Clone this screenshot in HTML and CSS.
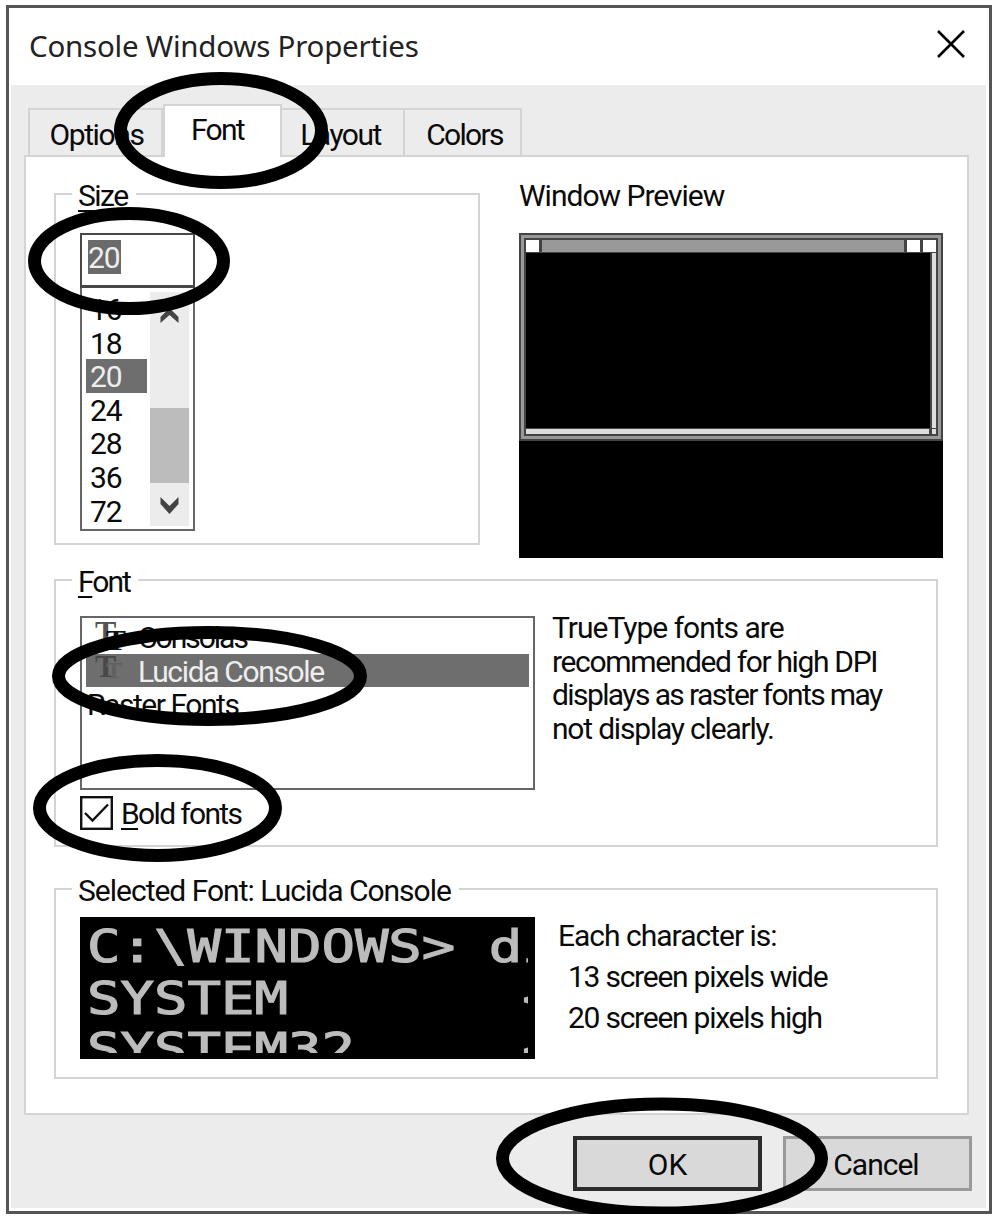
FILE: index.html
```html
<!DOCTYPE html>
<html lang="en">
<head>
<meta charset="utf-8">
<title>Console Windows Properties</title>
<link rel="stylesheet" href="styles.css">
</head>
<body>
<div class="window">
  <header class="titlebar">
    <h1 class="title">Console Windows Properties</h1>
    <svg class="close" width="30" height="30" viewBox="0 0 30 30"><path d="M2 2L28 28M28 2L2 28" stroke="#000" stroke-width="2.6" fill="none"/></svg>
  </header>
  <main class="body">
    <nav class="tabs">
      <div class="tab tab-options">Options</div>
      <div class="tab tab-font active">Font</div>
      <div class="tab tab-layout">Layout</div>
      <div class="tab tab-colors">Colors</div>
    </nav>
    <section class="panel">
      <div class="top-row">
        <fieldset class="group size-group">
          <legend><u>S</u>ize</legend>
          <div class="size-edit"><span class="selection">20</span></div>
          <div class="size-list">
            <div class="size-items">
              <div>16</div><div>18</div><div class="selected">20</div><div>24</div><div>28</div><div>36</div><div>72</div>
            </div>
            <div class="scrollbar">
              <svg width="39" height="36" viewBox="0 0 39 36"><path d="M10.5 25L19.500 16L28.500 25V31L19.500 23L10.500 31Z" fill="#444"/></svg>
              <div class="thumb"></div>
              <svg width="39" height="43" viewBox="0 0 39 43"><path d="M10.500 14L19.500 23L28.500 14V21L19.500 31L10.500 21Z" fill="#444"/></svg>
            </div>
          </div>
        </fieldset>
        <div class="preview">
          <div class="label preview-label">Window Preview</div>
          <div class="desktop">
            <div class="mini">
              <div class="mini-title"><i></i><b></b><i></i><i></i></div>
              <div class="mini-main"><div class="mini-screen"></div><div class="mini-vscroll"></div></div>
              <div class="mini-bottom"><div class="mini-hscroll"></div><div class="mini-corner"></div></div>
            </div>
          </div>
        </div>
      </div>
      <fieldset class="group font-group">
        <legend><u>F</u>ont</legend>
        <div class="font-row">
          <div class="font-list">
            <div class="font-item consolas"><span class="tt"><span class="t-back">T</span><span class="t-front">T</span></span>Consolas</div>
            <div class="font-item selected"><span class="tt"><span class="t-back">T</span><span class="t-front">T</span></span>Lucida Console</div>
            <div class="font-item raster">Raster Fonts</div>
          </div>
          <p class="advice"><span class="a1">TrueType fonts are</span><br><span class="a2">recommended for high DPI</span><br><span class="a3">displays as raster fonts may</span><br><span class="a4">not display clearly.</span></p>
        </div>
        <div class="check-row">
          <svg width="33" height="34" viewBox="0 0 33 34"><rect x="1.200" y="1.200" width="30.600" height="31.600" fill="#fff" stroke="#111" stroke-width="2.400"/><path d="M5 17L12.500 24.500L28 8.500" fill="none" stroke="#111" stroke-width="2.400"/></svg>
          <span class="bold-label"><u>B</u>old fonts</span>
        </div>
      </fieldset>
      <fieldset class="group sample-group">
        <legend class="sample-legend">Selected Font: Lucida Console</legend>
        <div class="sample-row">
          <div class="sample"><div class="sample-clip"><pre>C:\WINDOWS&gt; dir
SYSTEM       &lt;DIR&gt;
SYSTEM32     &lt;DIR&gt;</pre></div></div>
          <div class="metrics">
            <div class="m1">Each character is:</div>
            <div class="m2">13 screen pixels wide</div>
            <div class="m3">20 screen pixels high</div>
          </div>
        </div>
      </fieldset>
    </section>
    <footer class="buttons">
      <div class="button ok">OK</div>
      <div class="button cancel">Cancel</div>
    </footer>
  </main>
</div>
<svg class="marks" width="1000" height="1214" viewBox="0 0 1000 1214">
  <ellipse cx="221" cy="130.500" rx="100.500" ry="52"/>
  <ellipse cx="129" cy="261" rx="94.500" ry="47.500"/>
  <ellipse cx="209.500" cy="676" rx="151" ry="43.500"/>
  <ellipse cx="157.500" cy="808" rx="118" ry="47.500"/>
  <ellipse cx="662" cy="1158.500" rx="159.500" ry="54.500"/>
</svg>
</body>
</html>
```
FILE: styles.css
```css
* { box-sizing: border-box; }
body {
  margin: 0;
  width: 1000px;
  height: 1222px;
  padding: 5px 0 0 6px;
  overflow: hidden;
  background: #fff;
  color: #0a0a0a;
  font: 400 30px/34px Roboto, "Noto Sans", sans-serif;
  letter-spacing: -1px;
  position: relative;
}
.window {
  width: 986px;
  height: 1209px;
  border: 3px solid #555;
  background: #fff;
  padding: 0 3px 3px 2px;
  display: flex;
  flex-direction: column;
}
.titlebar {
  height: 77px;
  flex: none;
  display: flex;
  justify-content: space-between;
  align-items: flex-start;
  padding: 21px 20px 0 18px;
}
.title {
  margin: 0;
  font: 400 29.500px/34px "Noto Sans", sans-serif;
  letter-spacing: -0.230px;
  color: #222;
  white-space: nowrap;
}
.close { display: block; }
.body {
  flex: 1;
  background: #ececec;
  padding: 19px 17px 0 13px;
}
.tabs {
  display: flex;
  align-items: flex-end;
  height: 51px;
  padding-left: 4px;
}
.tab {
  height: 47px;
  border: 2px solid #d4d4d4;
  border-left-width: 0;
  border-bottom: 0;
  padding-top: 8px;
  text-align: center;
}
.tab-options { width: 135px; border-left-width: 2px; padding-left: 2px; letter-spacing: -1.400px; }
.tab-font { width: 119px; letter-spacing: -1.700px; }
.tab-layout { width: 123px; padding-right: 4px; letter-spacing: -1.500px; }
.tab-colors { width: 117px; padding-left: 4px; letter-spacing: -1.700px; }
.tab.active {
  height: 53px;
  margin-bottom: -2px;
  padding: 7px 10px 0 0;
  background: #fff;
  border-left-width: 2px;
  z-index: 1;
}
.panel {
  height: 960px;
  border: 2px solid #d4d4d4;
  background: #fff;
  padding: 22px 24px 0 28px;
}
.top-row { display: flex; justify-content: space-between; }
.group {
  margin: 0;
  padding: 0 0 0 24px;
  border: 2px solid #d4d4d4;
  min-width: 0;
}
.group legend {
  height: 30px;
  padding: 0 8px 0 6px;
  margin-left: -8px;
  white-space: nowrap;
}
u {
  text-decoration: underline;
  text-decoration-thickness: 2px;
  text-underline-offset: 4px;
}
.size-group { width: 426px; height: 366px; }
.size-group > legend { letter-spacing: -1.500px; }
.size-edit {
  width: 115px;
  height: 55px;
  margin-top: 24px;
  border: 2px solid #484848;
  border-bottom-width: 3px;
  padding: 5px 6px;
}
.selection {
  display: block;
  width: 33px;
  height: 34px;
  background: #6a6a6a;
  color: #eee;
  line-height: 36px;
}
.size-list {
  width: 115px;
  height: 243px;
  border: 2px solid #666;
  border-top: 0;
  display: flex;
  padding: 4px 4px 3px;
}
.size-items { width: 61px; margin-right: 3px; }
.size-items div { height: 33.600px; line-height: 35px; padding-left: 4px; }
.size-items .selected, .font-item.selected { background: #6e6e6e; color: #eee; }
.scrollbar { width: 39px; height: 234px; background: #ececec; display: flex; flex-direction: column; }
.scrollbar svg { display: block; flex: none; }
.thumb { height: 75px; margin-top: 80px; background: #bcbcbc; flex: none; }
.preview { width: 424px; }
.desktop { height: 325px; margin-top: 20px; background: #000; }
.mini {
  height: 208px;
  border: 2px solid #444;
  outline: 3px solid #999;
  outline-offset: -5px;
  padding: 3px;
  background: #444;
}
.mini-title { height: 15px; display: flex; gap: 3px; padding: 2px 2px 1px; }
.mini-title i { width: 13px; background: #fff; }
.mini-title b { flex: 1; background: #999; }
.mini-main { height: 175px; display: flex; padding: 0 2px; gap: 2px; }
.mini-screen { flex: 1; background: #000; }
.mini-vscroll { width: 4px; background: #ddd; }
.mini-bottom { height: 7px; display: flex; padding: 1px 2px; gap: 3px; }
.mini-hscroll { flex: 1; background: #ddd; }
.mini-corner { width: 4px; background: #ddd; }
.font-group { width: 884px; height: 282px; margin-top: 7px; }
.font-group > legend { letter-spacing: -2px; }
.font-row { display: flex; gap: 17px; margin-top: 21px; }
.font-list {
  width: 455px;
  height: 174px;
  border: 2px solid #666;
  padding: 2px 4px;
}
.font-item { height: 33.600px; display: flex; white-space: nowrap; line-height: 35px; letter-spacing: -1.350px; }
.consolas { letter-spacing: -2px; }
.raster { padding-left: 1px; letter-spacing: -1.450px; }
.tt {
  width: 52px;
  height: 33px;
  position: relative;
  font: 700 32px/30px "Liberation Serif", serif;
  letter-spacing: 0;
}
.t-back { position: absolute; left: 9px; top: -3px; color: #555; }
.t-front { position: absolute; left: 20px; top: 5px; font-size: 30px; color: #111; }
.selected .t-back { color: #484848; }
.selected .t-front { color: #606060; top: 1px; font-size: 24px; }
.advice { margin: -5px 0 0; line-height: 33.600px; white-space: nowrap; }
.a2 { letter-spacing: -1.350px; }
.a3 { letter-spacing: -1.600px; }
.a4 { letter-spacing: -1.200px; }
.check-row { display: flex; gap: 8px; margin-top: 6px; height: 34px; }
.check-row svg { display: block; }
.bold-label { line-height: 35px; letter-spacing: -1.650px; }
.sample-group { width: 884px; height: 205px; margin-top: 27px; }
.sample-row { display: flex; gap: 23px; margin-top: 13px; }
.sample { width: 455px; height: 142px; background: #000; padding: 4px 7px 6px 7px; }
.sample-clip { height: 132px; overflow: hidden; }
.sample pre {
  margin: 0;
  width: 520px;
  font: 400 45px/51.600px "DejaVu Sans Mono", monospace;
  letter-spacing: 0;
  color: #bcbcbc;
  -webkit-text-stroke: 1.200px #bcbcbc;
  transform: scaleX(1.236);
  transform-origin: 0 0;
}
.metrics { line-height: 41px; margin-top: -2px; white-space: nowrap; }
.m2, .m3 { padding-left: 10px; letter-spacing: -1.250px; }
.buttons { display: flex; justify-content: flex-end; gap: 21px; margin: 21px -3px 0 0; }
.button {
  width: 189px;
  height: 55px;
  border: 3px solid #999;
  background: #d9d9d9;
  text-align: center;
  line-height: 51px;
}
.cancel { padding-right: 3px; }
.ok { border: 4px solid #2c2c2c; line-height: 49px; letter-spacing: 0; }
.marks { position: absolute; left: 0; top: 0; pointer-events: none; }
.marks ellipse { fill: none; stroke: #000; stroke-width: 13; }
```
